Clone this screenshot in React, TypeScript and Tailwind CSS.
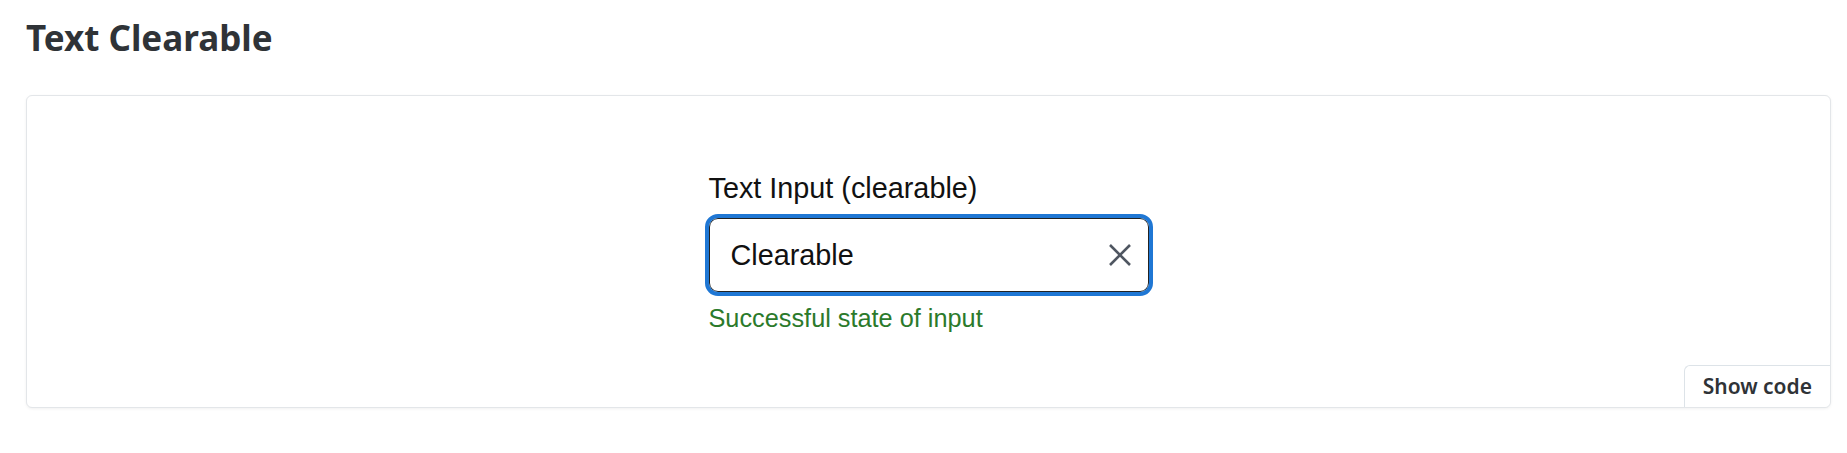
import { useState } from 'react';

const ClearIcon = () => (
  <svg width="22" height="22" viewBox="0 0 22 22" fill="none" stroke="#4f5661" strokeWidth="2.6">
    <path d="M1 1L21 21M21 1L1 21" />
  </svg>
);

export default function App() {
  const [value, setValue] = useState('Clearable');

  return (
    <div className="min-h-screen bg-white pl-[26px] pr-[16px] pt-[18px]" style={{ fontFamily: '"Noto Sans", Arial, sans-serif' }}>
      <h2 className="text-[35px] font-bold leading-[40px] text-[#2f3337]">Text Clearable</h2>

      <div className="mt-[37px] flex flex-col rounded-[6px] border border-[#e3e6e9] bg-white shadow-[0_1px_3px_rgba(0,0,0,0.06)]">
        <div className="flex justify-center pt-[75px]" style={{ fontFamily: '"Liberation Sans", Arial, sans-serif' }}>
          <div className="flex w-[440px] flex-col">
            <label className="text-[28.8px] leading-[34px] text-[#111]">Text Input (clearable)</label>
            <div className="mt-[13px] flex h-[74px] items-center rounded-[9px] border-[1.5px] border-[#222] pl-[21px] pr-[17px] outline-[4px] outline-[#1f77d4] outline-offset-0">
              <input
                value={value}
                onChange={(e) => setValue(e.target.value)}
                className="min-w-0 flex-1 bg-transparent text-[28.8px] leading-[34px] text-[#111] outline-none"
              />
              {value && (
                <button onClick={() => setValue('')} className="flex items-center justify-center">
                  <ClearIcon />
                </button>
              )}
            </div>
            <p className="mt-[11px] text-[25.3px] leading-[30px] text-[#2b7a2b]">Successful state of input</p>
          </div>
        </div>

        <div className="mt-[32px] flex justify-end">
          <button className="h-[42px] rounded-tl-[6px] rounded-br-[6px] border-l border-t border-[#dde3e8] bg-white px-[18px] text-[21px] font-semibold text-[#2f3337]">
            Show code
          </button>
        </div>
      </div>
    </div>
  );
}
